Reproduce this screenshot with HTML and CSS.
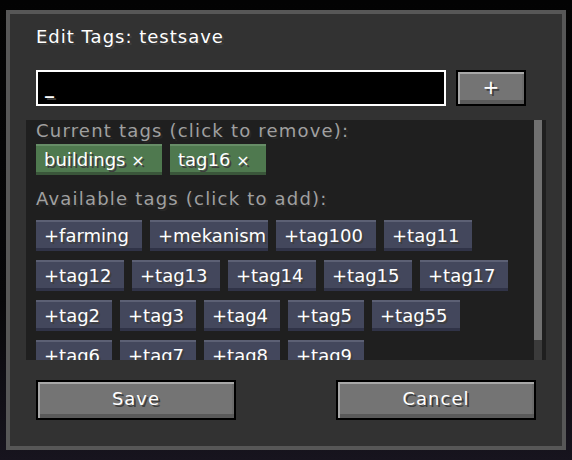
FILE: index.html
```html
<!DOCTYPE html>
<html>
<head>
<meta charset="utf-8">
<title>Edit Tags</title>
<link rel="stylesheet" href="styles.css">
</head>
<body>
<div class="dialog">
  <div class="title">Edit Tags: testsave</div>
  <div class="input-row">
    <div class="field"><span class="caret">_</span></div>
    <div class="btn plus">+</div>
  </div>
  <div class="scroll">
    <div class="scroll-content">
      <div class="label first">Current tags (click to remove):</div>
      <div class="tags cur-tags">
        <div class="chip cur w126">buildings <span class="x">×</span></div>
        <div class="chip cur w96">tag16 <span class="x">×</span></div>
      </div>
      <div class="label second">Available tags (click to add):</div>
      <div class="tags avail-tags">
        <div class="chip avail w106">+farming</div>
        <div class="chip avail w118">+mekanism</div>
        <div class="chip avail w100">+tag100</div>
        <div class="chip avail w88">+tag11</div>
        <div class="chip avail w88">+tag12</div>
        <div class="chip avail w88">+tag13</div>
        <div class="chip avail w88">+tag14</div>
        <div class="chip avail w88">+tag15</div>
        <div class="chip avail w88">+tag17</div>
        <div class="chip avail w76">+tag2</div>
        <div class="chip avail w76">+tag3</div>
        <div class="chip avail w76">+tag4</div>
        <div class="chip avail w76">+tag5</div>
        <div class="chip avail w88">+tag55</div>
        <div class="chip avail w76">+tag6</div>
        <div class="chip avail w76">+tag7</div>
        <div class="chip avail w76">+tag8</div>
        <div class="chip avail w76">+tag9</div>
      </div>
    </div>
    <div class="scrollbar"><div class="thumb"></div></div>
  </div>
  <div class="actions">
    <div class="btn wide">Save</div>
    <div class="btn wide">Cancel</div>
  </div>
</div>
</body>
</html>
```
FILE: styles.css
```css
html, body {
  margin: 0;
  padding: 0;
}
body {
  width: 572px;
  height: 460px;
  display: flex;
  align-items: center;
  justify-content: center;
  background: linear-gradient(to bottom, #030303 0%, #070709 65%, #17141e 100%);
  font-family: "DejaVu Sans", sans-serif;
  font-size: 18px;
  letter-spacing: 1px;
  overflow: hidden;
}
.dialog {
  box-sizing: border-box;
  width: 560px;
  height: 440px;
  border: 4px solid #575757;
  background: #323232;
  padding-top: 13px;
}
.title {
  margin: 0 26px;
  line-height: 20px;
  height: 20px;
  color: #ffffff;
  text-shadow: 2px 2px 0 #3f3f3f;
}
.input-row {
  display: flex;
  gap: 10px;
  margin: 23px 26px 0;
}
.field {
  box-sizing: border-box;
  width: 410px;
  height: 36px;
  border: 2px solid #ffffff;
  background: #000000;
  padding: 2px 0 0 7px;
  line-height: 28px;
  color: #ffffff;
}
.caret {
  font-weight: bold;
  text-shadow: 2px 2px 0 #3f3f3f;
}
.btn {
  box-sizing: border-box;
  border: 2px solid #000000;
  background-color: #747474;
  box-shadow: inset 2px 2px 0 #a8a8a8, inset 0 -4px 0 #5a5a5a, inset -2px 0 0 #6c6c6c;
  color: #ffffff;
  text-shadow: 2px 2px 0 #3f3f3f;
  text-align: center;
}
.plus {
  width: 70px;
  height: 36px;
  line-height: 30px;
  letter-spacing: 0;
  font-size: 20px;
}
.scroll {
  display: flex;
  height: 240px;
  margin: 14px 16px 0;
  background: #1f1f1f;
}
.scroll-content {
  flex: 1;
  overflow: hidden;
  padding-left: 10px;
}
.scrollbar {
  width: 8px;
  margin-right: 4px;
  background: #3b3b3b;
  display: flex;
  flex-direction: column;
}
.thumb {
  height: 220px;
  background: #707070;
}
.label {
  line-height: 20px;
  height: 20px;
  color: #a0a0a0;
  text-shadow: 2px 2px 0 #282828;
  letter-spacing: 1.2px;
  white-space: nowrap;
}
.label.first {
  margin-top: 1px;
}
.label.second {
  margin-top: 14px;
}
.tags {
  display: flex;
  flex-wrap: wrap;
  gap: 9px 8px;
}
.cur-tags {
  margin-top: 3px;
}
.avail-tags {
  margin-top: 11px;
}
.chip {
  box-sizing: border-box;
  height: 31px;
  padding-left: 8px;
  line-height: 31px;
  color: #ffffff;
  text-shadow: 2px 2px 0 #3f3f3f;
  letter-spacing: 0;
  white-space: nowrap;
  flex: none;
}
.chip.cur {
  background: #4f794f;
  box-shadow: inset 0 2px 0 #678d67, inset 0 -3px 0 #3a563a;
}
.chip.avail {
  background: #43475c;
  box-shadow: inset 0 2px 0 #5c6074, inset 0 -3px 0 #303347;
}
.x {
  font-size: 16px;
}
.w76 { width: 76px; }
.w88 { width: 88px; }
.w96 { width: 96px; }
.w100 { width: 100px; }
.w106 { width: 106px; }
.w118 { width: 118px; }
.w126 { width: 126px; }
.actions {
  display: flex;
  justify-content: space-between;
  margin: 20px 26px 0;
}
.wide {
  width: 200px;
  height: 40px;
  line-height: 34px;
}
```
